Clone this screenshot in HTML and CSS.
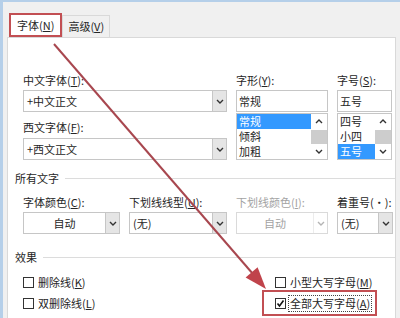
FILE: index.html
```html
<!DOCTYPE html>
<html lang="zh-CN">
  <head>
    <meta charset="UTF-8" />
    <title>字体</title>
    <link rel="stylesheet" href="styles.css">
  </head>
  <body>
    <div class="window">
      <div class="tabs">
        <div class="tab active">字体(<u>N</u>)</div>
        <div class="tab">高级(<u>V</u>)</div>
      </div>

      <div class="panel">
        <div class="font-grid">
          <div class="col">
            <div class="label">中文字体(<u>T</u>):</div>
            <div class="combo">
              <span class="value">+中文正文</span>
              <span class="drop"><svg width="8" height="5" viewBox="0 0 8 5"><polyline points="1,1 4,4 7,1" /></svg></span>
            </div>
            <div class="label next">西文字体(<u>F</u>):</div>
            <div class="combo">
              <span class="value">+西文正文</span>
              <span class="drop"><svg width="8" height="5" viewBox="0 0 8 5"><polyline points="1,1 4,4 7,1" /></svg></span>
            </div>
          </div>

          <div class="col">
            <div class="label">字形(<u>Y</u>):</div>
            <div class="field">常规</div>
            <div class="listbox">
              <ul>
                <li class="sel">常规</li>
                <li>倾斜</li>
                <li>加粗</li>
              </ul>
              <div class="scroll">
                <span class="btn"><svg width="8" height="5" viewBox="0 0 8 5"><polyline points="1,4 4,1 7,4" /></svg></span>
                <span class="thumb"></span>
                <span class="btn"><svg width="8" height="5" viewBox="0 0 8 5"><polyline points="1,1 4,4 7,1" /></svg></span>
              </div>
            </div>
          </div>

          <div class="col">
            <div class="label">字号(<u>S</u>):</div>
            <div class="field">五号</div>
            <div class="listbox">
              <ul>
                <li>四号</li>
                <li>小四</li>
                <li class="sel">五号</li>
              </ul>
              <div class="scroll">
                <span class="btn"><svg width="8" height="5" viewBox="0 0 8 5"><polyline points="1,4 4,1 7,4" /></svg></span>
                <span class="thumb"></span>
                <span class="btn"><svg width="8" height="5" viewBox="0 0 8 5"><polyline points="1,1 4,4 7,1" /></svg></span>
              </div>
            </div>
          </div>
        </div>

        <div class="group">所有文字</div>

        <div class="text-grid">
          <div class="col">
            <div class="label">字体颜色(<u>C</u>):</div>
            <div class="combo center">
              <span class="value">自动</span>
              <span class="drop"><svg width="8" height="5" viewBox="0 0 8 5"><polyline points="1,1 4,4 7,1" /></svg></span>
            </div>
          </div>
          <div class="col">
            <div class="label">下划线线型(<u>U</u>):</div>
            <div class="combo">
              <span class="value">(无)</span>
              <span class="drop"><svg width="8" height="5" viewBox="0 0 8 5"><polyline points="1,1 4,4 7,1" /></svg></span>
            </div>
          </div>
          <div class="col disabled">
            <div class="label">下划线颜色(<u>I</u>):</div>
            <div class="combo center">
              <span class="value">自动</span>
              <span class="drop"><svg width="8" height="5" viewBox="0 0 8 5"><polyline points="1,1 4,4 7,1" /></svg></span>
            </div>
          </div>
          <div class="col">
            <div class="label">着重号(·):</div>
            <div class="combo">
              <span class="value">(无)</span>
              <span class="drop"><svg width="8" height="5" viewBox="0 0 8 5"><polyline points="1,1 4,4 7,1" /></svg></span>
            </div>
          </div>
        </div>

        <div class="group effects-title">效果</div>

        <div class="effects">
          <div class="check"><span class="box"></span><span class="text">删除线(<u>K</u>)</span></div>
          <div class="check"><span class="box"></span><span class="text">小型大写字母(<u>M</u>)</span></div>
          <div class="check"><span class="box"></span><span class="text">双删除线(<u>L</u>)</span></div>
          <div class="check focus highlight">
            <span class="box"><svg width="9" height="9" viewBox="0 0 9 9"><polyline points="1.5,4.5 3.5,7 7.5,1.5" /></svg></span>
            <span class="text">全部大写字母(<u>A</u>)</span>
          </div>
        </div>
      </div>
    </div>

    <!-- annotation arrow from the tab to the checkbox -->
    <svg class="arrow" width="400" height="318" viewBox="0 0 400 318">
      <line x1="54" y1="44" x2="253" y2="274" />
      <polygon points="266,289 245.6,277.6 257.6,267.2" />
    </svg>
  </body>
</html>
```

FILE: styles.css
```css
* {
  margin: 0;
  padding: 0;
  box-sizing: border-box;
}

body {
  width: 400px;
  height: 318px;
  overflow: hidden;
  background: #f0f0f0;
  font-family: "Noto Sans CJK SC", sans-serif;
  font-size: 11px;
  color: #262626;
}

.window {
  height: 318px;
  border-top: 2px solid #b5cfe9;
  border-left: 3px solid #b5cfe9;
  padding-left: 4px;
}

.tabs {
  display: flex;
  align-items: flex-end;
  height: 35px;
  padding-left: 2px;
}

.tab {
  height: 22px;
  padding: 0 5px;
  line-height: 20px;
  border: 1px solid #d9d9d9;
  border-bottom: none;
  background: #f0f0f0;
  white-space: nowrap;
}

.tab.active {
  height: 24px;
  padding: 0 6px;
  background: #fff;
  border: 2px solid #c24f53;
}

.panel {
  width: 389px;
  height: 281px;
  background: #fff;
  border: 1px solid #d9d9d9;
  border-bottom: none;
}

.font-grid {
  display: grid;
  grid-template-columns: 204px 92px 55px;
  column-gap: 9px;
  padding: 34px 0 0 15px;
}

.col {
  display: flex;
  flex-direction: column;
}

.label {
  height: 16px;
  line-height: 16px;
  margin-bottom: 2px;
  white-space: nowrap;
}

.label.next {
  margin-top: 7px;
  margin-bottom: 3px;
}

.combo {
  display: flex;
  height: 22px;
  border: 1px solid #c6c6c6;
  background: #fff;
}

.combo .value {
  flex: 1;
  padding-left: 3px;
  line-height: 20px;
  white-space: nowrap;
}

.combo.center .value {
  text-align: center;
  padding-left: 0;
}

.drop {
  width: 14px;
  display: flex;
  align-items: center;
  justify-content: center;
  background: #e5e5e5;
  border-left: 1px solid #c6c6c6;
}

svg polyline {
  fill: none;
  stroke: #333;
  stroke-width: 1.4;
}

.disabled {
  color: #a3a3a3;
}

.disabled .combo {
  border-color: #dadada;
}

.disabled .drop {
  background: none;
  border-left-color: #ececec;
}

.disabled polyline {
  stroke: #b4b4b4;
}

.field {
  height: 22px;
  border: 1px solid #c6c6c6;
  padding-left: 2px;
  line-height: 20px;
}

.listbox {
  display: flex;
  height: 47px;
  margin-top: 1px;
  border: 1px solid #c6c6c6;
}

.listbox ul {
  list-style: none;
  flex: 1;
}

.listbox li {
  height: 15px;
  line-height: 15px;
  padding-left: 2px;
}

.listbox li.sel {
  background: #3399ff;
  color: #fff;
}

.scroll {
  width: 16px;
  display: flex;
  flex-direction: column;
}

.scroll .btn {
  height: 15px;
  display: flex;
  align-items: center;
  justify-content: center;
}

.scroll .thumb {
  height: 14px;
  margin-top: 1px;
  background: #cdcdcd;
}

.group {
  display: flex;
  align-items: center;
  height: 16px;
  line-height: 16px;
  margin-top: 10px;
  padding-left: 7px;
}

.group::after {
  content: "";
  flex: 1;
  height: 1px;
  margin-left: 6px;
  background: #dcdcdc;
}

.effects-title {
  margin-top: 15px;
}

.text-grid {
  display: grid;
  grid-template-columns: 97px 98px 92px 56px;
  column-gap: 9px;
  padding: 8px 0 0 15px;
}

.effects {
  display: grid;
  grid-template-columns: 252px auto;
  row-gap: 5px;
  padding: 9px 0 0 15px;
}

.check {
  display: flex;
  align-items: center;
  height: 16px;
  white-space: nowrap;
}

.box {
  width: 11px;
  height: 11px;
  margin-right: 4px;
  border: 1px solid #333;
  background: #fff;
  display: flex;
  align-items: center;
  justify-content: center;
}

.box polyline {
  stroke: #111;
  stroke-width: 1.6;
}

.check.focus .box {
  margin-right: 2px;
}

.check.focus .text {
  border: 1px dotted #444;
  padding: 0 1px;
  line-height: 15px;
}

.highlight {
  position: relative;
  justify-self: start;
}

.highlight::after {
  content: "";
  position: absolute;
  left: -13px;
  right: -5px;
  top: -5px;
  bottom: -5px;
  border: 2px solid #c24f53;
}

.arrow {
  position: absolute;
  left: 0;
  top: 0;
  pointer-events: none;
}

.arrow line {
  stroke: #a8474f;
  stroke-width: 2;
}

.arrow polygon {
  fill: #c0434b;
}
```
